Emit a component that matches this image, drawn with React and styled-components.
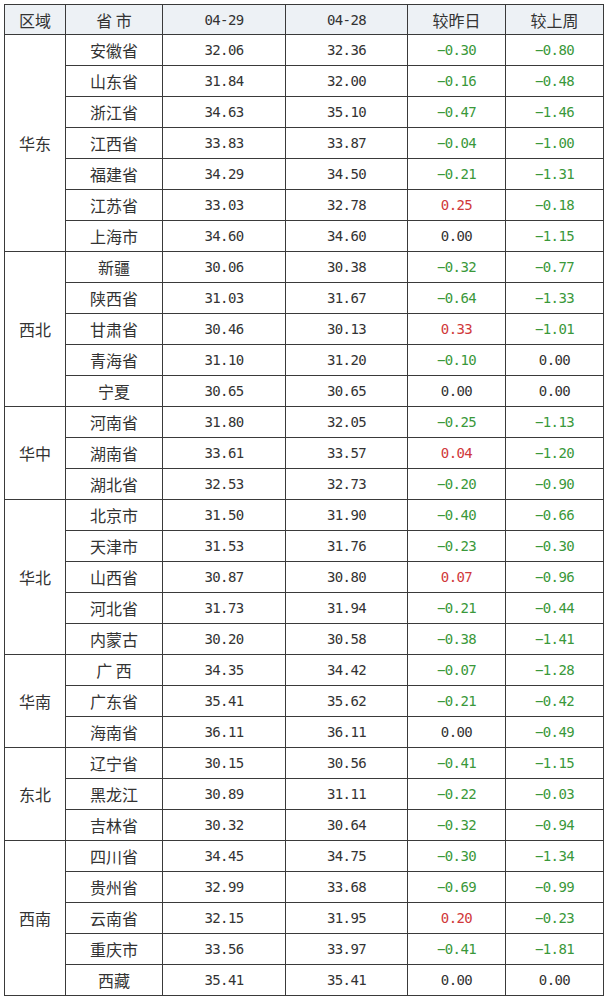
import React from "react";
import styled, { createGlobalStyle } from "styled-components";

const Global = createGlobalStyle`
  html, body { margin: 0; padding: 0; background: #ffffff; }
  body { font-family: "Noto Sans CJK SC", "Noto Sans", sans-serif; color: #333; }
`;

const Page = styled.div`
  padding: 4px 0 6px 4px;
  width: 608px;
  box-sizing: border-box;
`;

const Table = styled.table`
  border-collapse: collapse;
  table-layout: fixed;
  width: 599px;
`;

const HeadRow = styled.tr`
  height: 30px;
  background: #edf1f5;
`;

const Row = styled.tr`
  height: 31px;
`;

const HeadCell = styled.th`
  border: 1px solid #3a3a3a;
  padding: 0;
  font-weight: normal;
  text-align: center;
  vertical-align: middle;
  color: #333;
  font-family: ${(p) =>
    p.$mono ? '"DejaVu Sans Mono", monospace' : '"Noto Sans CJK SC", sans-serif'};
  font-size: ${(p) => (p.$mono ? "14px" : "16px")};
  letter-spacing: ${(p) => (p.$mono ? "-0.6px" : "0")};
  white-space: pre;
  line-height: 1;
`;

const RegionCell = styled.td`
  border: 1px solid #3a3a3a;
  padding: 0;
  text-align: center;
  vertical-align: middle;
  font-size: 16px;
  line-height: 1;
  color: #333;
`;

const NameCell = styled.td`
  border: 1px solid #3a3a3a;
  padding: 0;
  text-align: center;
  vertical-align: middle;
  font-size: 16px;
  line-height: 1;
  color: #333;
  white-space: pre;
`;

const toneColor = { up: "#d0393b", down: "#3a983a", flat: "#333333" };

const NumCell = styled.td`
  border: 1px solid #3a3a3a;
  padding: 0;
  text-align: center;
  vertical-align: middle;
  font-family: "DejaVu Sans Mono", monospace;
  font-size: 14px;
  letter-spacing: -0.6px;
  line-height: 1;
  color: ${(p) => toneColor[p.$tone || "flat"]};
`;

const data = [
  ["华东", [
    ["安徽省", "32.06", "32.36", "-0.30", "-0.80"],
    ["山东省", "31.84", "32.00", "-0.16", "-0.48"],
    ["浙江省", "34.63", "35.10", "-0.47", "-1.46"],
    ["江西省", "33.83", "33.87", "-0.04", "-1.00"],
    ["福建省", "34.29", "34.50", "-0.21", "-1.31"],
    ["江苏省", "33.03", "32.78", "0.25", "-0.18"],
    ["上海市", "34.60", "34.60", "0.00", "-1.15"],
  ]],
  ["西北", [
    ["新疆", "30.06", "30.38", "-0.32", "-0.77"],
    ["陕西省", "31.03", "31.67", "-0.64", "-1.33"],
    ["甘肃省", "30.46", "30.13", "0.33", "-1.01"],
    ["青海省", "31.10", "31.20", "-0.10", "0.00"],
    ["宁夏", "30.65", "30.65", "0.00", "0.00"],
  ]],
  ["华中", [
    ["河南省", "31.80", "32.05", "-0.25", "-1.13"],
    ["湖南省", "33.61", "33.57", "0.04", "-1.20"],
    ["湖北省", "32.53", "32.73", "-0.20", "-0.90"],
  ]],
  ["华北", [
    ["北京市", "31.50", "31.90", "-0.40", "-0.66"],
    ["天津市", "31.53", "31.76", "-0.23", "-0.30"],
    ["山西省", "30.87", "30.80", "0.07", "-0.96"],
    ["河北省", "31.73", "31.94", "-0.21", "-0.44"],
    ["内蒙古", "30.20", "30.58", "-0.38", "-1.41"],
  ]],
  ["华南", [
    ["广 西", "34.35", "34.42", "-0.07", "-1.28"],
    ["广东省", "35.41", "35.62", "-0.21", "-0.42"],
    ["海南省", "36.11", "36.11", "0.00", "-0.49"],
  ]],
  ["东北", [
    ["辽宁省", "30.15", "30.56", "-0.41", "-1.15"],
    ["黑龙江", "30.89", "31.11", "-0.22", "-0.03"],
    ["吉林省", "30.32", "30.64", "-0.32", "-0.94"],
  ]],
  ["西南", [
    ["四川省", "34.45", "34.75", "-0.30", "-1.34"],
    ["贵州省", "32.99", "33.68", "-0.69", "-0.99"],
    ["云南省", "32.15", "31.95", "0.20", "-0.23"],
    ["重庆市", "33.56", "33.97", "-0.41", "-1.81"],
    ["西藏", "35.41", "35.41", "0.00", "0.00"],
  ]],
];

const tone = (v) => {
  const n = parseFloat(v);
  if (n > 0) return "up";
  if (n < 0) return "down";
  return "flat";
};

const show = (v) => v.replace("-", "\u2212");

export default function App() {
  return (
    <>
      <Global />
      <Page>
        <Table>
          <colgroup>
            <col style={{ width: 61 }} />
            <col style={{ width: 97 }} />
            <col style={{ width: 123 }} />
            <col style={{ width: 122 }} />
            <col style={{ width: 98 }} />
            <col style={{ width: 98 }} />
          </colgroup>
          <thead>
            <HeadRow>
              <HeadCell>区域</HeadCell>
              <HeadCell>省 市</HeadCell>
              <HeadCell $mono>04-29</HeadCell>
              <HeadCell $mono>04-28</HeadCell>
              <HeadCell>较昨日</HeadCell>
              <HeadCell>较上周</HeadCell>
            </HeadRow>
          </thead>
          <tbody>
            {data.map(([region, rows]) =>
              rows.map((r, i) => (
                <Row key={region + r[0]}>
                  {i === 0 && <RegionCell rowSpan={rows.length}>{region}</RegionCell>}
                  <NameCell>{r[0]}</NameCell>
                  <NumCell>{r[1]}</NumCell>
                  <NumCell>{r[2]}</NumCell>
                  <NumCell $tone={tone(r[3])}>{show(r[3])}</NumCell>
                  <NumCell $tone={tone(r[4])}>{show(r[4])}</NumCell>
                </Row>
              ))
            )}
          </tbody>
        </Table>
      </Page>
    </>
  );
}
